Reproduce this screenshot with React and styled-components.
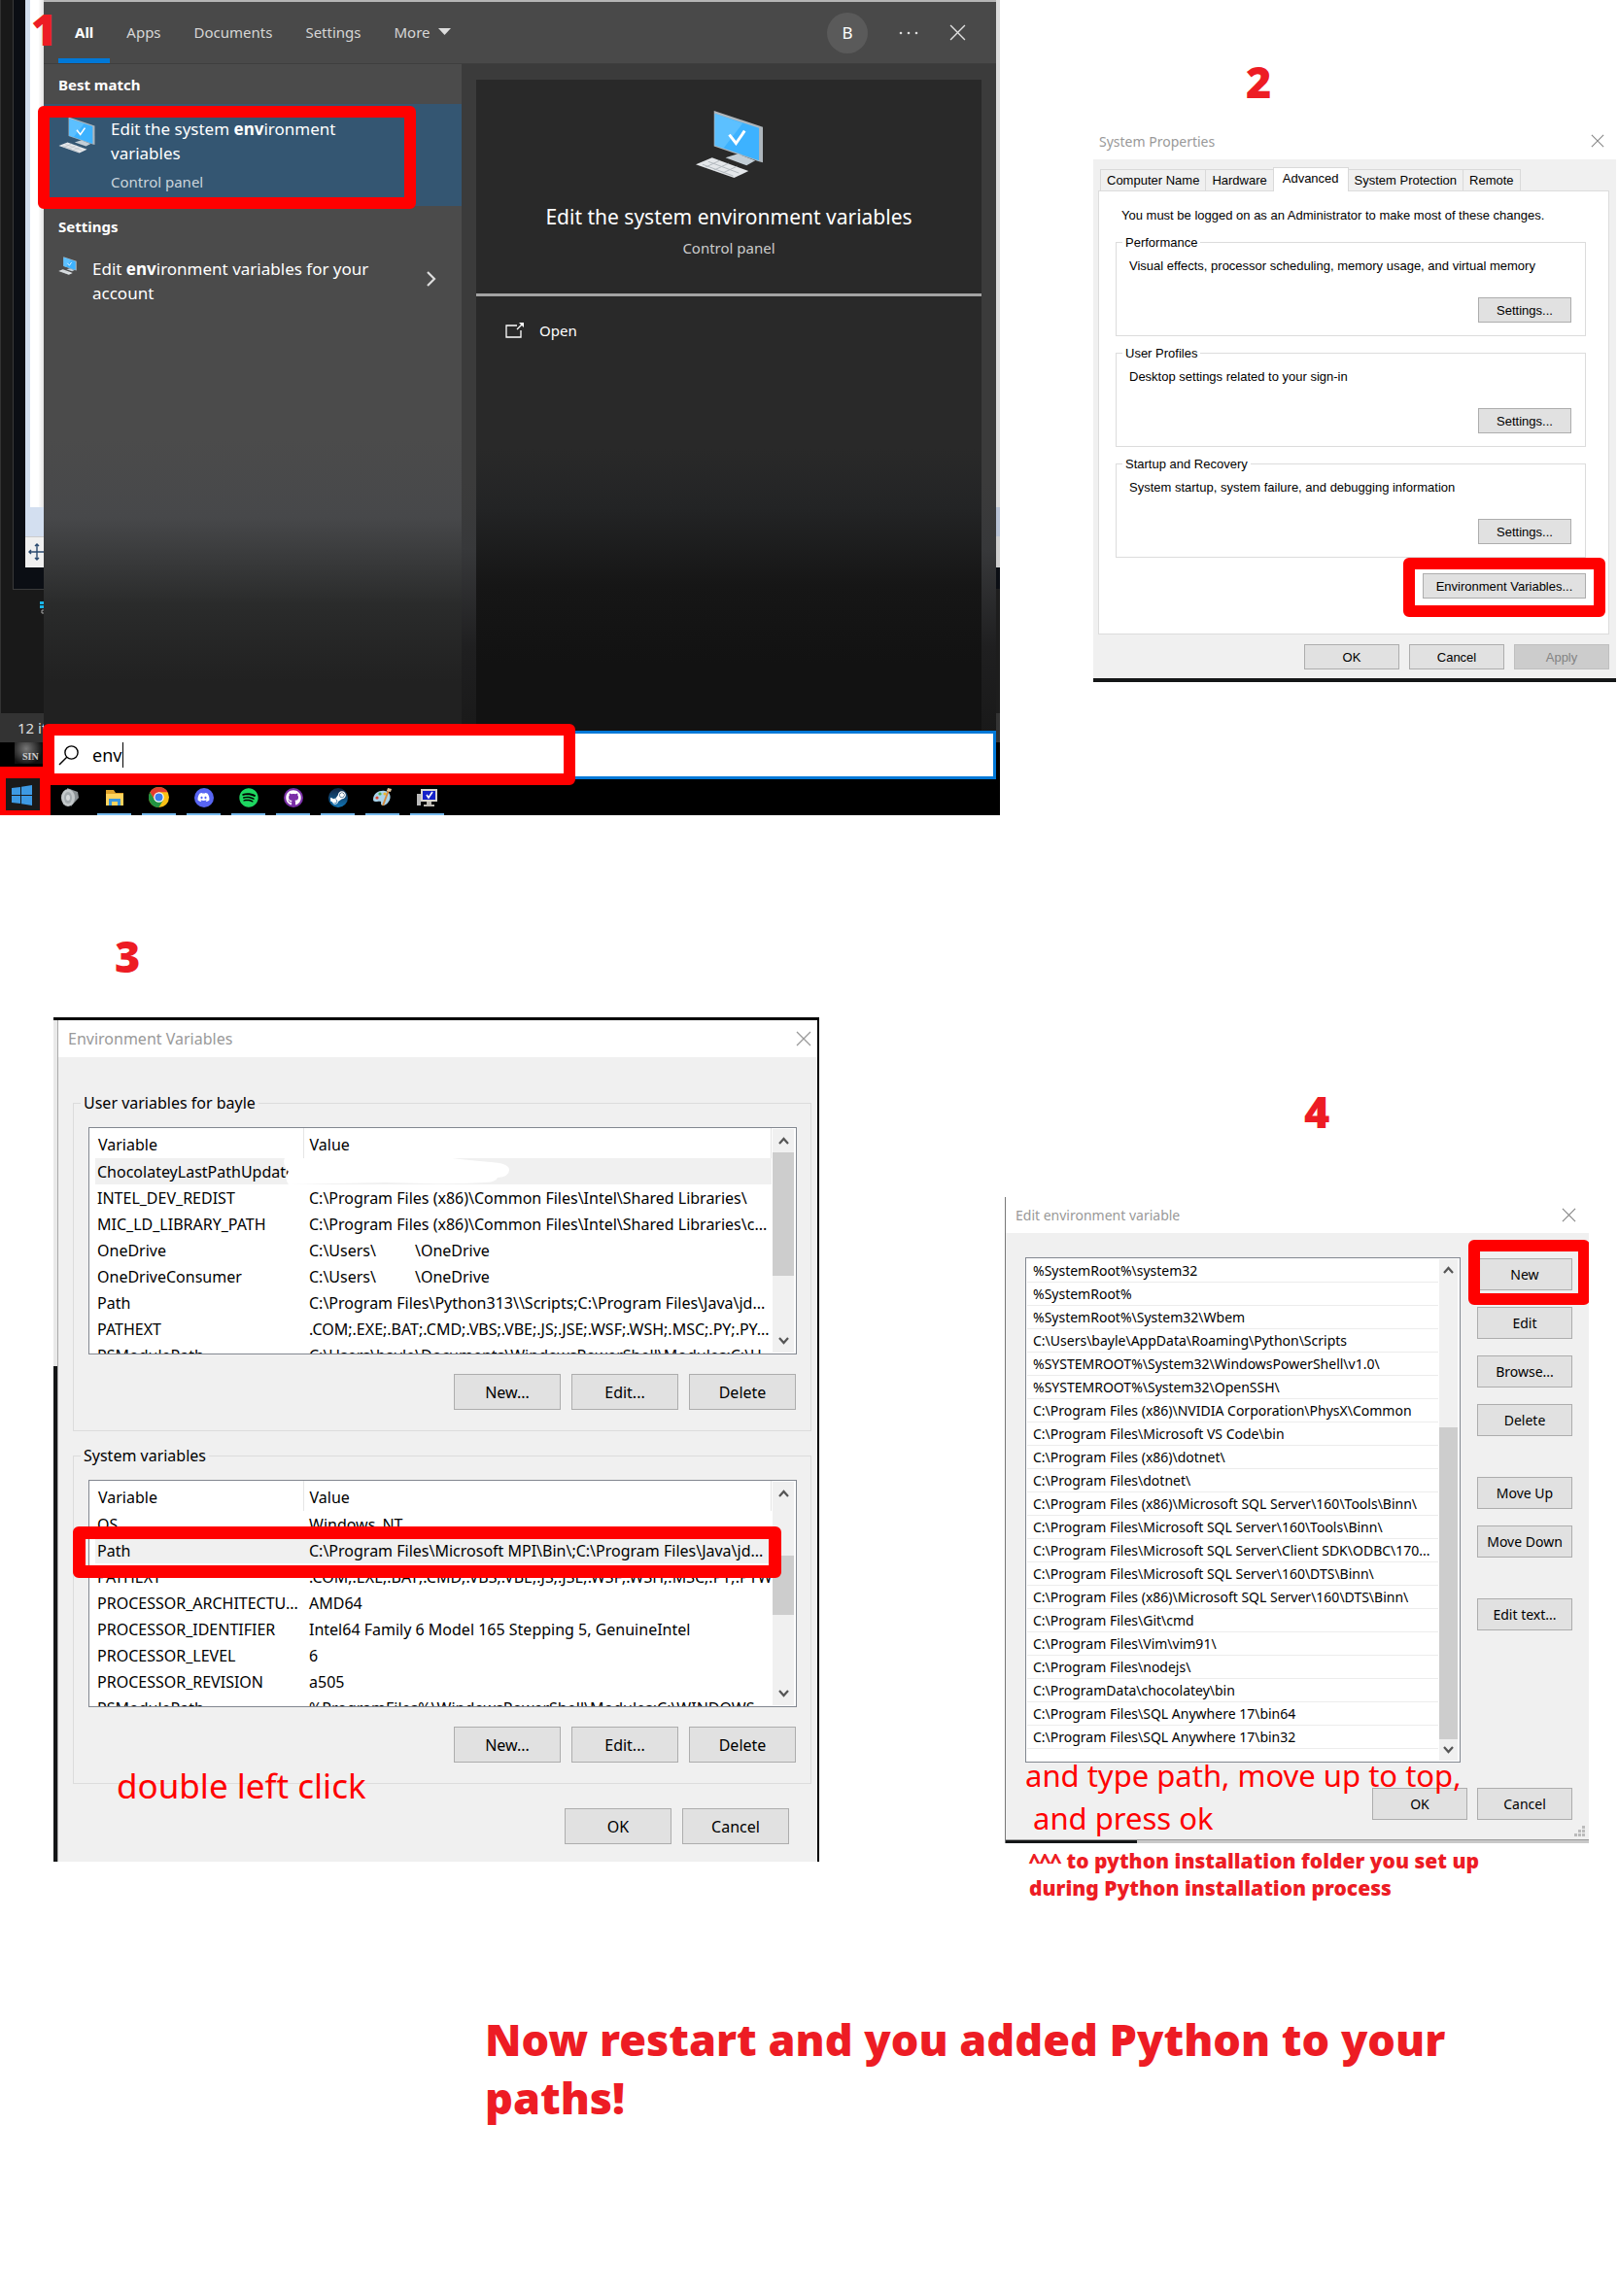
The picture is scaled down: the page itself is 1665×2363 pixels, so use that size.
import React from "react";
import styled, { createGlobalStyle, css } from "styled-components";
import { FaDiscord, FaSpotify, FaGithub, FaSteamSymbol } from "react-icons/fa";

const segoe = `"Noto Sans", "Open Sans", sans-serif`;
const sans = `"Liberation Sans", Arial, sans-serif`;
const marker = "#ed1c24";

const GlobalStyle = createGlobalStyle`
  *, *::before, *::after { box-sizing: border-box; }
  body { margin: 0; background: #fff; font-family: ${segoe}; color: #000; }
  button, input { font: inherit; color: inherit; margin: 0; padding: 0; border: 0; background: none; border-radius: 0; }
  h2, p, ul { margin: 0; padding: 0; font-weight: 400; }
  ul { list-style: none; }
  svg { display: block; flex: none; }
`;

/* ---------- page ---------- */

const Page = styled.main`
  padding-bottom: 172px;
`;

const TopRow = styled.div`
  display: grid;
  grid-template-columns: 1029fr 96fr 538fr 2fr;
  align-items: start;
`;

const MiddleRow = styled.div`
  display: grid;
  grid-template-columns: 55fr 788fr 191fr 601fr 30fr;
  align-items: start;
`;

const ClosingRow = styled.div`
  display: grid;
  grid-template-columns: 499fr 1033fr 133fr;
  margin-top: 112px;
`;

const Step = styled.section`
  grid-column: ${(p) => p.$column};
  min-width: 0;
  padding-top: ${(p) => p.$top}px;
`;

const StepNumber = styled.h2`
  font-size: 45px;
  line-height: 60px;
  font-weight: 900;
  color: ${marker};
  padding-left: ${(p) => p.$indent}px;
  margin-bottom: ${(p) => p.$gap}px;
`;

const OverlayNumber = styled(StepNumber)`
  position: absolute;
  left: 32px;
  top: 0;
  margin: 0;
  padding: 0;
`;

const Closing = styled.p`
  grid-column: 2;
  font-size: 45px;
  line-height: 60px;
  font-weight: 900;
  color: ${marker};
`;

const Footnote = styled.p`
  max-width: 500px;
  margin: 4px 0 0 25px;
  font-size: 21px;
  line-height: 28px;
  font-weight: 900;
  color: ${marker};
`;

const Highlight = styled.span`
  position: absolute;
  z-index: 2;
  inset: ${(p) => p.$inset};
  border: 12px solid #f00;
  border-radius: 6px;
  pointer-events: none;
`;

const Note = styled.p`
  position: absolute;
  z-index: 2;
  left: ${(p) => p.$left}px;
  bottom: ${(p) => p.$bottom}px;
  font-size: ${(p) => p.$size}px;
  line-height: 44px;
  color: #f00;
  white-space: pre;
`;

/* ---------- step 1: start menu search ---------- */

const Desktop = styled.div`
  position: relative;
  display: flex;
  flex-direction: column;
  background: #000;
  overflow: hidden;
`;

const DesktopBody = styled.div`
  display: flex;
  height: 802px;
`;

const Backdrop = styled.div`
  width: 45px;
  flex: none;
  display: flex;
  flex-direction: column;
  overflow: hidden;
`;

const ExplorerSlice = styled.div`
  height: 734px;
  padding-left: 12px;
  background: #191919;
  border-left: 1px solid #333;
`;

const EditorSlice = styled.div`
  height: 607px;
  padding-left: 12px;
  background: #0b0e14;
  border-left: 1px solid #3a3a3a;
  border-bottom: 1px solid #3a3a3a;
`;

const CanvasSlice = styled.div`
  height: 552px;
  padding: 0 0 30px 5px;
  background: #d3dff0;
`;

const Paper = styled.div`
  height: 522px;
  background: linear-gradient(90deg, #fff 60%, #e2e2e2);
`;

const PaintStatus = styled.div`
  height: 32px;
  padding: 6px 0 0 3px;
  background: #f0f0f0;
  border-top: 1px solid #ccc;
`;

const ExplorerRow = styled.div`
  display: flex;
  justify-content: flex-end;
  padding-top: 12px;
`;

const ExplorerStatus = styled.div`
  height: 30px;
  padding-left: 18px;
  background: #333;
  color: #ddd;
  font-size: 15px;
  line-height: 30px;
  white-space: nowrap;
`;

const Thumb = styled.div`
  margin-left: 15px;
  height: 22px;
  background: radial-gradient(circle at 40% 30%, #777, #111 70%);
  color: #ccc;
  font: 700 10px/30px "Liberation Serif", serif;
  padding-left: 8px;
  overflow: hidden;
`;

const RightSlice = styled.div`
  width: 4px;
  flex: none;
  background: linear-gradient(#dcdcdc 0 522px, #b9c3d6 522px 552px, #cfcfcf 552px 584px, #0b0e14 584px 606px, #1d1d1d 606px 734px, #333 734px 764px, #000 764px);
`;

const SearchWindow = styled.div`
  flex: 1;
  min-width: 0;
  display: flex;
  flex-direction: column;
  border-top: 2px solid #b5b5b5;
  color: #fff;
  background: linear-gradient(#4b4b4b 0 450px, #47484a 530px, #2a2b2b 620px, #212121 700px);
`;

const TabBar = styled.div`
  display: flex;
  align-items: stretch;
  height: 64px;
  padding: 0 31px 0 15px;
  border-bottom: 1px solid #3e3e3e;
  background: #494949;
`;

const SearchTab = styled.button`
  display: flex;
  align-items: center;
  gap: 8px;
  padding: 3px 17px 0;
  border-bottom: 5px solid ${(p) => (p.$active ? "#0078d7" : "transparent")};
  font-size: 15px;
  font-weight: ${(p) => (p.$active ? 700 : 400)};
  color: ${(p) => (p.$active ? "#fff" : "#d6d6d6")};
`;

const BarActions = styled.div`
  display: flex;
  align-items: center;
  gap: 32px;
  margin-left: auto;
`;

const Avatar = styled.button`
  width: 42px;
  height: 42px;
  border-radius: 50%;
  background: #5a5a5a;
  font-size: 17px;
`;

const SearchColumns = styled.div`
  flex: 1;
  display: grid;
  grid-template-columns: 430fr 550fr;
  min-height: 0;
`;

const ResultHeading = styled.h2`
  padding: 2px 0 0 15px;
  font-size: 15px;
  line-height: 39px;
  font-weight: 700;
`;

const Result = styled.button`
  position: relative;
  display: flex;
  align-items: flex-start;
  gap: 16px;
  width: 100%;
  padding: ${(p) => (p.$best ? "13px 60px 12px 15px" : "11px 26px 8px 15px")};
  background: ${(p) => (p.$best ? "#345672" : "none")};
  text-align: left;
  font-size: 17px;
  line-height: 25px;
`;

const ResultText = styled.span`
  flex: 1;
`;

const ResultKind = styled.span`
  display: block;
  margin-top: 5px;
  font-size: 15px;
  color: #ccd5dc;
`;

const PreviewPane = styled.div`
  padding: 16px 15px 0;
  background: linear-gradient(#3b3b3b 0 430px, #37383a 500px, #1f1f20 600px, #191919 690px);
`;

const Preview = styled.div`
  height: 100%;
  background: linear-gradient(#292929 0 380px, #232425 440px, #161616 520px, #121212 600px);
`;

const PreviewCard = styled.div`
  display: flex;
  flex-direction: column;
  align-items: center;
  height: 223px;
  padding-top: 31px;
  border-bottom: 3px solid #a3a3a3;
`;

const PreviewTitle = styled.p`
  margin-top: 23px;
  font-size: 21px;
  line-height: 32px;
`;

const PreviewKind = styled.p`
  margin-top: 3px;
  font-size: 15px;
  line-height: 26px;
  color: #ccc;
`;

const OpenAction = styled.button`
  display: flex;
  align-items: center;
  gap: 15px;
  padding: 22px 30px;
  font-size: 15px;
  line-height: 26px;
`;

const SearchBox = styled.div`
  height: 50px;
  flex: none;
  border: 3px solid #0078d7;
  background: #fff;
  color: #000;
`;

const QueryField = styled.label`
  position: relative;
  display: flex;
  align-items: center;
  gap: 14px;
  width: 56%;
  height: 44px;
  padding-left: 12px;
`;

const Query = styled.input`
  width: 31px;
  font-size: 18px;
  line-height: 25px;
  outline: 0;
`;

const Typed = styled.span`
  display: flex;
  padding-top: 1px;
  border-right: 1px solid #000;
`;

const Taskbar = styled.div`
  display: flex;
  height: 37px;
`;

const StartButton = styled.button`
  position: relative;
  width: 47px;
`;

const StartTile = styled.span`
  position: absolute;
  inset: -13px -5px 0 0;
  display: flex;
  align-items: center;
  padding: 2px 0 0 6px;
  border: solid #f00;
  border-width: 12px 11px 5px 6px;
  background: #1a1a1a;
`;

const TaskButton = styled.button`
  display: flex;
  align-items: center;
  justify-content: center;
  width: 35px;
  margin-right: 11px;
  padding-top: 2px;
  border-bottom: 2px solid ${(p) => (p.$open ? "#76b9ed" : "transparent")};
`;

const TaskList = styled.div`
  display: flex;
  padding-left: 7px;
`;

const Badge = styled.span`
  display: flex;
  align-items: center;
  justify-content: center;
  width: 20px;
  height: 20px;
  border-radius: 50%;
  color: ${(p) => p.$color};
  background: ${(p) => p.$background};
`;

const PcIcon = ({ size }) => (
  <svg width={size} height={size} viewBox="0 0 72 72">
    <path d="M20 1 71 18v37l-4-1-47-16z" fill="#aeb6bc" />
    <path d="M21 4 67 19v34L21 37z" fill="#3db2ff" />
    <path d="M21 4 50 14 30 40 21 37z" fill="#5cc0ff" />
    <path d="m36 26 7 9 9-13" fill="none" stroke="#fff" strokeWidth="3" />
    <path d="m32 50 13-4 18 7-9 5z" fill="#c3ced6" />
    <path d="M1 57 18 50l38 14-15 7z" fill="#e4e7ea" />
    <path d="m8 57 32 12M14 54l32 12M11 60l15-7M20 63l15-7M29 66l15-7" stroke="#b3b9be" strokeWidth="1" />
  </svg>
);

const CloseIcon = ({ size, color }) => (
  <svg width={size} height={size} viewBox="0 0 16 16">
    <path d="M1 1 15 15M15 1 1 15" stroke={color} strokeWidth="1.3" />
  </svg>
);

const MoveIcon = () => (
  <svg width="18" height="18" viewBox="0 0 18 18">
    <path d="M9 1v16M1 9h16M7 3l2-2 2 2M7 15l2 2 2-2M3 7 1 9l2 2" fill="none" stroke="#2b4a6f" strokeWidth="1.4" />
  </svg>
);

const LensIcon = () => (
  <svg width="21" height="21" viewBox="0 0 21 21">
    <circle cx="13.5" cy="7.5" r="6.6" fill="none" stroke="#000" strokeWidth="1.4" />
    <path d="M9 12 1 20" stroke="#000" strokeWidth="1.4" />
  </svg>
);

const OpenIcon = () => (
  <svg width="20" height="16" viewBox="0 0 20 16">
    <path d="M12 3H1v12h15V8M12 7l5-5" fill="none" stroke="#fff" strokeWidth="1.3" />
    <path d="M14 0h5v5z" fill="#fff" />
  </svg>
);

const WindowsIcon = () => (
  <svg width="21" height="21" viewBox="0 0 21 21" fill="#3d9ae4">
    <path d="M0 3 9 2v8H0zM10 1.800 21 0v10H10zM0 11h9v8l-9-1zM10 11h11v10l-11-1.800z" />
  </svg>
);

const SpeakerIcon = () => (
  <svg width="20" height="20" viewBox="0 0 20 20">
    <path d="M7 0 18 4l1 6-8 9z" fill="#8b9194" />
    <ellipse cx="8" cy="10" rx="7" ry="9" fill="#c3c8ca" />
    <ellipse cx="8" cy="10" rx="4" ry="6" fill="#a4abae" />
    <ellipse cx="8" cy="10" rx="2" ry="3" fill="#d5d9db" />
  </svg>
);

const FolderIcon = () => (
  <svg width="20" height="18" viewBox="0 0 20 18">
    <path d="M1 1h8l2 3h8v13H1z" fill="#e0a32b" />
    <path d="M1 5h18v12H1z" fill="#ffd35c" />
    <path d="M4 17v-7h12v7h-3v-4H7v4z" fill="#3a96dd" />
  </svg>
);

const ChromeIcon = () => (
  <svg width="21" height="21" viewBox="0 0 24 24">
    <circle cx="12" cy="12" r="12" fill="#fbc116" />
    <path d="M1.600 6A12 12 0 0 1 22.400 6H12L6.800 15z" fill="#e33b2e" />
    <path d="M1.600 6A12 12 0 0 0 12 24l5.200-9H6.800z" fill="#229342" />
    <circle cx="12" cy="12" r="6" fill="#fff" />
    <circle cx="12" cy="12" r="4.600" fill="#3b7ded" />
  </svg>
);

const PaletteIcon = () => (
  <svg width="21" height="21" viewBox="0 0 21 21">
    <path d="M1 13C1 6 8 3 13 4c6 1 7 7 4 11-3 5-8 5-8 2 1-3-2-2-4-2s-4 0-4-2z" fill="#a9d3ea" />
    <circle cx="5" cy="11" r="1.600" fill="#d9442f" />
    <circle cx="8" cy="7" r="1.600" fill="#4caf50" />
    <circle cx="13" cy="7" r="1.600" fill="#f0b429" />
    <path d="M11 19 17 3" stroke="#d58a3c" strokeWidth="2" />
    <path d="m15 4 1-3 4 1-1 3z" fill="#e8c9a0" />
  </svg>
);

const MonitorIcon = () => (
  <svg width="21" height="20" viewBox="0 0 21 20">
    <path d="M0 6h4v12H0z" fill="#b9b9b9" />
    <path d="M4 1h17v13H4z" fill="#d9d6cf" />
    <path d="M6 3h13v9H6z" fill="#1522c9" />
    <path d="m10 7 2 3 4-6" fill="none" stroke="#fff" strokeWidth="1.600" />
    <path d="M10 14h5v3h3v2H7v-2h3z" fill="#bdbab3" />
  </svg>
);

const TASKS = [
  { label: "Sound", open: false, icon: <SpeakerIcon /> },
  { label: "File Explorer", open: true, icon: <FolderIcon /> },
  { label: "Chrome", open: true, icon: <ChromeIcon /> },
  { label: "Discord", open: true, icon: <Badge $color="#fff" $background="#5865f2"><FaDiscord size={13} /></Badge> },
  { label: "Spotify", open: true, icon: <Badge $color="#1ed760" $background="#000"><FaSpotify size={20} /></Badge> },
  { label: "GitHub", open: true, icon: <Badge $color="#fff" $background="#7b2fa8"><FaGithub size={16} /></Badge> },
  { label: "Steam", open: true, icon: <Badge $color="#fff" $background="linear-gradient(#10223f, #1275b5)"><FaSteamSymbol size={18} /></Badge> },
  { label: "Paint", open: true, icon: <PaletteIcon /> },
  { label: "System", open: true, icon: <MonitorIcon /> },
];

const StartSearch = () => (
  <Desktop>
    <DesktopBody>
      <Backdrop>
        <ExplorerSlice>
          <EditorSlice>
            <CanvasSlice>
              <Paper />
            </CanvasSlice>
            <PaintStatus>
              <MoveIcon />
            </PaintStatus>
          </EditorSlice>
          <ExplorerRow>
            <svg width="4" height="14" viewBox="0 0 4 14">
              <path d="M0 0h4v3H0zM0 4h4v3H0z" fill="#19b5e8" />
              <path d="M4 9H2v3h2" fill="none" stroke="#aaa" />
            </svg>
          </ExplorerRow>
        </ExplorerSlice>
        <ExplorerStatus>12 it</ExplorerStatus>
        <Thumb>SIN</Thumb>
      </Backdrop>
      <SearchWindow>
        <TabBar>
          <SearchTab $active>All</SearchTab>
          <SearchTab>Apps</SearchTab>
          <SearchTab>Documents</SearchTab>
          <SearchTab>Settings</SearchTab>
          <SearchTab>
            More
            <svg width="13" height="7" viewBox="0 0 13 7">
              <path d="M0 0h13L6.500 7z" fill="#ddd" />
            </svg>
          </SearchTab>
          <BarActions>
            <Avatar>B</Avatar>
            <svg width="20" height="4" viewBox="0 0 20 4" fill="#ddd">
              <circle cx="2" cy="2" r="1.300" />
              <circle cx="10" cy="2" r="1.300" />
              <circle cx="18" cy="2" r="1.300" />
            </svg>
            <button aria-label="Close">
              <CloseIcon size={17} color="#e0e0e0" />
            </button>
          </BarActions>
        </TabBar>
        <SearchColumns>
          <div>
            <ResultHeading>Best match</ResultHeading>
            <Result $best>
              <PcIcon size={38} />
              <ResultText>
                Edit the system <b>env</b>ironment variables
                <ResultKind>Control panel</ResultKind>
              </ResultText>
              <Highlight $inset="2px 47px -3px -6px" />
            </Result>
            <ResultHeading>Settings</ResultHeading>
            <Result>
              <PcIcon size={19} />
              <ResultText>
                Edit <b>env</b>ironment variables for your account
              </ResultText>
              <svg width="10" height="34" viewBox="0 0 10 34">
                <path d="m1 16 7 7-7 7" fill="none" stroke="#ddd" strokeWidth="2.200" />
              </svg>
            </Result>
          </div>
          <PreviewPane>
            <Preview>
              <PreviewCard>
                <PcIcon size={71} />
                <PreviewTitle>Edit the system environment variables</PreviewTitle>
                <PreviewKind>Control panel</PreviewKind>
              </PreviewCard>
              <OpenAction>
                <OpenIcon />
                Open
              </OpenAction>
            </Preview>
          </PreviewPane>
        </SearchColumns>
        <SearchBox>
          <QueryField>
            <LensIcon />
            <Typed>
              <Query aria-label="Search" defaultValue="env" />
            </Typed>
            <Highlight $inset="-10px 1px -9px -4px" />
          </QueryField>
        </SearchBox>
      </SearchWindow>
      <RightSlice />
    </DesktopBody>
    <Taskbar>
      <StartButton aria-label="Start">
        <StartTile>
          <WindowsIcon />
        </StartTile>
      </StartButton>
      <TaskList>
        {TASKS.map((t) => (
          <TaskButton key={t.label} aria-label={t.label} $open={t.open}>
            {t.icon}
          </TaskButton>
        ))}
      </TaskList>
    </Taskbar>
    <OverlayNumber>1</OverlayNumber>
  </Desktop>
);

/* ---------- shared dialog parts ---------- */

const TitleBar = styled.div`
  display: flex;
  align-items: center;
  justify-content: space-between;
  height: ${(p) => p.$height}px;
  padding: 0 ${(p) => p.$right}px 0 ${(p) => p.$left}px;
  background: #fff;
  color: #999;
  font-family: ${segoe};
  font-size: ${(p) => p.$size}px;
`;

const DialogButton = styled.button`
  position: relative;
  width: ${(p) => p.$width}px;
  height: ${(p) => p.$height}px;
  background: #e1e1e1;
  border: 1px solid #adadad;
  white-space: nowrap;

  &:disabled {
    background: #ccc;
    border-color: #bfbfbf;
    color: #838383;
  }
`;

const ButtonRow = styled.div`
  display: flex;
  justify-content: flex-end;
  gap: ${(p) => p.$gap}px;
  padding: ${(p) => p.$padding};
`;

const Chevron = ({ down }) => (
  <svg width="11" height="8" viewBox="0 0 11 8">
    <path d={down ? "m1 1 4.500 5L10 1" : "m1 7 4.500-5L10 7"} fill="none" stroke="#555" strokeWidth="2.200" />
  </svg>
);

const ScrollTrack = styled.div`
  display: flex;
  flex-direction: column;
  align-items: center;
  flex: none;
  width: ${(p) => p.$width}px;
  margin: 1px 2px 1px 1px;
  background: #f0f0f0;
`;

const ScrollEnd = styled.button`
  display: flex;
  align-items: center;
  justify-content: center;
  width: 100%;
  height: 24px;
`;

const ScrollLane = styled.div`
  flex: 1;
  width: 100%;
  padding-top: ${(p) => p.$before}px;
`;

const ScrollThumb = styled.div`
  height: ${(p) => p.$length}px;
  background: #cdcdcd;
`;

const ScrollBar = ({ width, before, length }) => (
  <ScrollTrack $width={width}>
    <ScrollEnd aria-label="Scroll up"><Chevron /></ScrollEnd>
    <ScrollLane $before={before}>
      <ScrollThumb $length={length} />
    </ScrollLane>
    <ScrollEnd aria-label="Scroll down"><Chevron down /></ScrollEnd>
  </ScrollTrack>
);

/* ---------- step 2: system properties ---------- */

const PropertiesDialog = styled.div`
  font-family: ${sans};
  font-size: 13px;
  background: #f0f0f0;
  border-bottom: 4px solid #141617;
`;

const PropertiesBody = styled.div`
  padding: 8px 7px 9px 5px;
`;

const PropertyTabs = styled.div`
  display: flex;
  align-items: flex-end;
  padding-left: 2px;
`;

const PropertyTab = styled.button`
  height: 22px;
  padding: 0 6px;
  border: 1px solid #d9d9d9;
  border-bottom: 0;
  border-right-width: ${(p) => (p.$last ? 1 : 0)}px;
  white-space: nowrap;

  ${(p) =>
    p.$active &&
    css`
      height: 25px;
      margin-bottom: -1px;
      padding: 0 9px 3px;
      border-right-width: 1px;
      margin-right: -1px;
      background: #fff;
      z-index: 1;
    `}
`;

const PropertySheet = styled.div`
  height: 457px;
  padding: 16px 23px 0 17px;
  background: #fff;
  border: 1px solid #dcdcdc;
`;

const SheetIntro = styled.p`
  padding: 0 0 3px 6px;
  line-height: 18px;
  white-space: nowrap;
`;

const Group = styled.fieldset`
  min-width: 0;
  height: 105px;
  margin: 7px 0 9px;
  padding: 0 14px 13px 13px;
  border: 1px solid #dcdcdc;
  display: flex;
  flex-direction: column;
  justify-content: space-between;
  align-items: flex-end;

  & + & {
    margin-top: 0;
  }
`;

const GroupLegend = styled.legend`
  margin-left: -7px;
  padding: 0 3px;
  line-height: 17px;
`;

const GroupText = styled.p`
  align-self: flex-start;
  padding-top: 7px;
  line-height: 18px;
  white-space: nowrap;
`;

const SheetButtonRow = styled.div`
  display: flex;
  justify-content: flex-end;
  padding-top: 7px;
`;

const GROUPS = [
  ["Performance", "Visual effects, processor scheduling, memory usage, and virtual memory"],
  ["User Profiles", "Desktop settings related to your sign-in"],
  ["Startup and Recovery", "System startup, system failure, and debugging information"],
];

const SystemProperties = () => (
  <PropertiesDialog>
    <TitleBar as="header" $height={38} $left={6} $right={12} $size={14}>
      System Properties
      <button aria-label="Close"><CloseIcon size={14} color="#888" /></button>
    </TitleBar>
    <PropertiesBody>
      <PropertyTabs>
        <PropertyTab>Computer Name</PropertyTab>
        <PropertyTab>Hardware</PropertyTab>
        <PropertyTab $active>Advanced</PropertyTab>
        <PropertyTab>System Protection</PropertyTab>
        <PropertyTab $last>Remote</PropertyTab>
      </PropertyTabs>
      <PropertySheet>
        <SheetIntro>You must be logged on as an Administrator to make most of these changes.</SheetIntro>
        {GROUPS.map(([title, text]) => (
          <Group key={title}>
            <GroupLegend>{title}</GroupLegend>
            <GroupText>{text}</GroupText>
            <DialogButton $width={96} $height={26}>Settings...</DialogButton>
          </Group>
        ))}
        <SheetButtonRow>
          <DialogButton $width={168} $height={26}>
            Environment Variables...
            <Highlight $inset="-17px -21px -20px -21px" />
          </DialogButton>
        </SheetButtonRow>
      </PropertySheet>
      <ButtonRow $gap={10} $padding="10px 0 0">
        <DialogButton $width={98} $height={26}>OK</DialogButton>
        <DialogButton $width={98} $height={26}>Cancel</DialogButton>
        <DialogButton $width={98} $height={26} disabled>Apply</DialogButton>
      </ButtonRow>
    </PropertiesBody>
  </PropertiesDialog>
);

/* ---------- step 3: environment variables ---------- */

const VariablesShot = styled.div`
  position: relative;
  display: flex;
  border-top: 3px solid #000;
  border-right: 2px solid #000;
`;

const VariablesEdge = styled.div`
  width: 5px;
  flex: none;
  background: linear-gradient(#e9e9e9 0 356px, #141617 356px);
  border-right: 1px solid #aaa;
`;

const VariablesDialog = styled.div`
  flex: 1;
  min-width: 0;
  background: #f0f0f0;
  font-size: 16px;
`;

const VariablesBody = styled.div`
  padding: 35px 6px 18px 15px;
`;

const VariablesGroup = styled.fieldset`
  min-width: 0;
  margin: 0 0 13px;
  padding: 13px 14px 21px 15px;
  border: 1px solid #dcdcdc;
`;

const VariablesLegend = styled.legend`
  margin-left: -8px;
  padding: 0 3px;
  line-height: 24px;
`;

const ListBox = styled.div`
  position: relative;
  display: flex;
  height: 234px;
  border: 1px solid #828790;
  background: #fff;
`;

const ListViewport = styled.div`
  flex: 1;
  min-width: 0;
  overflow: hidden;
`;

const VariableTable = styled.table`
  width: 100%;
  table-layout: fixed;
  border-collapse: collapse;
`;

const NameColumn = styled.col`
  width: 217px;
`;

const HeadCell = styled.th`
  height: 31px;
  padding: 2px 0 0 6px;
  border-right: 1px solid #e5e5e5;
  font-weight: 400;
  text-align: left;
`;

const Cell = styled.td`
  position: relative;
  height: 27px;
  padding: 0 0 0 6px;
  line-height: 26px;
  white-space: nowrap;
  overflow: ${(p) => (p.$open ? "visible" : "hidden")};
  background: ${(p) => (p.$selected ? "#f0f0f0" : "#fff")};

  &:first-child {
    padding-left: 2px;
    border-left: 6px solid #fff;
  }
`;

const Redacted = styled.span`
  display: inline-block;
  width: 40px;
`;

const Smudge = styled.svg`
  position: absolute;
  left: -20px;
  top: 0;
`;

const RowHighlight = styled(Highlight)`
  border-width: 13px;
`;

const VariableList = ({ rows, label, before, length, children }) => (
  <ListBox>
    <ListViewport>
      <VariableTable aria-label={label}>
        <colgroup>
          <NameColumn />
          <col />
        </colgroup>
        <thead>
          <tr>
            <HeadCell>Variable</HeadCell>
            <HeadCell>Value</HeadCell>
          </tr>
        </thead>
        <tbody>
          {rows.map((r) => (
            <tr key={r.name}>
              <Cell $selected={r.selected}>{r.name}</Cell>
              <Cell $selected={r.selected} $open={r.erased}>
                {r.value}
                {r.erased && (
                  <Smudge width="236" height="27" viewBox="0 0 236 27">
                    <path d="M1 0h172q16 2 40 4 19 1 19 8t-12 8q-2 5-14 5-30 2-60 1L104 25 5 27Q0 20 5 14-2 6 1 0z" fill="#fff" />
                  </Smudge>
                )}
              </Cell>
            </tr>
          ))}
        </tbody>
      </VariableTable>
    </ListViewport>
    <ScrollBar width={22} before={before} length={length} />
    {children}
  </ListBox>
);

const oneDrive = (
  <>
    C:\Users\
    <Redacted />
    \OneDrive
  </>
);

const USER_ROWS = [
  { name: "ChocolateyLastPathUpdate", value: "", selected: true, erased: true },
  { name: "INTEL_DEV_REDIST", value: "C:\\Program Files (x86)\\Common Files\\Intel\\Shared Libraries\\" },
  { name: "MIC_LD_LIBRARY_PATH", value: "C:\\Program Files (x86)\\Common Files\\Intel\\Shared Libraries\\c..." },
  { name: "OneDrive", value: oneDrive },
  { name: "OneDriveConsumer", value: oneDrive },
  { name: "Path", value: "C:\\Program Files\\Python313\\\\Scripts;C:\\Program Files\\Java\\jd..." },
  { name: "PATHEXT", value: ".COM;.EXE;.BAT;.CMD;.VBS;.VBE;.JS;.JSE;.WSF;.WSH;.MSC;.PY;.PY..." },
  { name: "PSModulePath", value: "C:\\Users\\bayle\\Documents\\WindowsPowerShell\\Modules;C:\\U..." },
];

const SYSTEM_ROWS = [
  { name: "OS", value: "Windows_NT" },
  { name: "Path", value: "C:\\Program Files\\Microsoft MPI\\Bin\\;C:\\Program Files\\Java\\jd...", selected: true },
  { name: "PATHEXT", value: ".COM;.EXE;.BAT;.CMD;.VBS;.VBE;.JS;.JSE;.WSF;.WSH;.MSC;.PY;.PYW" },
  { name: "PROCESSOR_ARCHITECTU...", value: "AMD64" },
  { name: "PROCESSOR_IDENTIFIER", value: "Intel64 Family 6 Model 165 Stepping 5, GenuineIntel" },
  { name: "PROCESSOR_LEVEL", value: "6" },
  { name: "PROCESSOR_REVISION", value: "a505" },
  { name: "PSModulePath", value: "%ProgramFiles%\\WindowsPowerShell\\Modules;C:\\WINDOWS..." },
];

const VariableButtons = () => (
  <ButtonRow $gap={11} $padding="20px 1px 0">
    <DialogButton $width={110} $height={37}>New...</DialogButton>
    <DialogButton $width={110} $height={37}>Edit...</DialogButton>
    <DialogButton $width={110} $height={37}>Delete</DialogButton>
  </ButtonRow>
);

const EnvironmentVariables = () => (
  <VariablesShot>
    <VariablesEdge />
    <VariablesDialog>
      <TitleBar as="header" $height={38} $left={10} $right={6} $size={16}>
        Environment Variables
        <button aria-label="Close"><CloseIcon size={16} color="#999" /></button>
      </TitleBar>
      <VariablesBody>
        <VariablesGroup>
          <VariablesLegend>User variables for bayle</VariablesLegend>
          <VariableList label="User variables" rows={USER_ROWS} before={0} length={127} />
          <VariableButtons />
        </VariablesGroup>
        <VariablesGroup>
          <VariablesLegend>System variables</VariablesLegend>
          <VariableList label="System variables" rows={SYSTEM_ROWS} before={52} length={61}>
            <RowHighlight $inset="47px 15px 132px -17px" />
          </VariableList>
          <VariableButtons />
        </VariablesGroup>
        <ButtonRow $gap={11} $padding="12px 23px 0">
          <DialogButton $width={110} $height={37}>OK</DialogButton>
          <DialogButton $width={110} $height={37}>Cancel</DialogButton>
        </ButtonRow>
      </VariablesBody>
    </VariablesDialog>
    <Note $left={65} $bottom={56} $size={35}>double left click</Note>
  </VariablesShot>
);

/* ---------- step 4: edit environment variable ---------- */

const EditShot = styled.div`
  position: relative;
  overflow: hidden;
  border-left: 1px solid #777;
  background: linear-gradient(90deg, #141617 0 135px, #c8c8c8 135px);
  padding-bottom: 3px;
  font-size: 14px;
`;

const EditBody = styled.div`
  display: flex;
  gap: 17px;
  padding: 25px 17px 0 20px;
  background: #f0f0f0;
`;

const PathBox = styled.div`
  flex: 1;
  min-width: 0;
  display: flex;
  height: 520px;
  border: 1px solid #828790;
  background: #fff;
`;

const PathList = styled.ul`
  flex: 1;
  min-width: 0;
  padding: 1px 0 0 1px;
`;

const PathItem = styled.li`
  height: 24px;
  padding-left: 6px;
  border-bottom: 1px solid #ececec;
  line-height: 24px;
  white-space: nowrap;
  overflow: hidden;
`;

const SideButtons = styled.div`
  display: flex;
  flex-direction: column;
  gap: 17px;
  padding-top: 1px;
`;

const SideGroup = styled.div`
  display: flex;
  flex-direction: column;
  gap: 17px;
  margin-bottom: 25px;
`;

const EditFooter = styled.div`
  background: #f0f0f0;
  border-bottom: 1px solid #999;
`;

const Grip = styled.svg`
  margin: 6px 3px 2px auto;
`;

const PATHS = [
  "%SystemRoot%\\system32",
  "%SystemRoot%",
  "%SystemRoot%\\System32\\Wbem",
  "C:\\Users\\bayle\\AppData\\Roaming\\Python\\Scripts",
  "%SYSTEMROOT%\\System32\\WindowsPowerShell\\v1.0\\",
  "%SYSTEMROOT%\\System32\\OpenSSH\\",
  "C:\\Program Files (x86)\\NVIDIA Corporation\\PhysX\\Common",
  "C:\\Program Files\\Microsoft VS Code\\bin",
  "C:\\Program Files (x86)\\dotnet\\",
  "C:\\Program Files\\dotnet\\",
  "C:\\Program Files (x86)\\Microsoft SQL Server\\160\\Tools\\Binn\\",
  "C:\\Program Files\\Microsoft SQL Server\\160\\Tools\\Binn\\",
  "C:\\Program Files\\Microsoft SQL Server\\Client SDK\\ODBC\\170...",
  "C:\\Program Files\\Microsoft SQL Server\\160\\DTS\\Binn\\",
  "C:\\Program Files (x86)\\Microsoft SQL Server\\160\\DTS\\Binn\\",
  "C:\\Program Files\\Git\\cmd",
  "C:\\Program Files\\Vim\\vim91\\",
  "C:\\Program Files\\nodejs\\",
  "C:\\ProgramData\\chocolatey\\bin",
  "C:\\Program Files\\SQL Anywhere 17\\bin64",
  "C:\\Program Files\\SQL Anywhere 17\\bin32",
];

const SIDE_GROUPS = [["New", "Edit", "Browse...", "Delete"], ["Move Up", "Move Down"], ["Edit text..."]];

const EditVariable = () => (
  <EditShot>
    <TitleBar as="header" $height={37} $left={10} $right={13} $size={14}>
      Edit environment variable
      <button aria-label="Close"><CloseIcon size={15} color="#888" /></button>
    </TitleBar>
    <EditBody>
      <PathBox>
        <PathList>
          {PATHS.map((p) => (
            <PathItem key={p}>{p}</PathItem>
          ))}
        </PathList>
        <ScrollBar width={19} before={151} length={321} />
      </PathBox>
      <SideButtons>
        {SIDE_GROUPS.map((labels) => (
          <SideGroup key={labels[0]}>
            {labels.map((l) => (
              <DialogButton key={l} $width={98} $height={33}>
                {l}
                {l === "New" && <Highlight $inset="-20px -19px -16px -10px" />}
              </DialogButton>
            ))}
          </SideGroup>
        ))}
      </SideButtons>
    </EditBody>
    <EditFooter>
      <ButtonRow $gap={10} $padding="26px 17px 0">
        <DialogButton $width={98} $height={33}>OK</DialogButton>
        <DialogButton $width={98} $height={33}>Cancel</DialogButton>
      </ButtonRow>
      <Grip width="12" height="12" viewBox="0 0 12 12" fill="#bbb">
        <path d="M8 0h3v3H8zM8 4h3v3H8zM4 4h3v3H4zM8 8h3v3H8zM4 8h3v3H4zM0 8h3v3H0z" />
      </Grip>
    </EditFooter>
    <Note $left={20} $bottom={4} $size={31}>{"and type path, move up to top,\n and press ok"}</Note>
  </EditShot>
);

export default function App() {
  return (
    <Page>
      <GlobalStyle />
      <TopRow>
        <Step $column={1} $top={0}>
          <StartSearch />
        </Step>
        <Step $column={3} $top={54}>
          <StepNumber $indent={157} $gap={12}>2</StepNumber>
          <SystemProperties />
        </Step>
      </TopRow>
      <MiddleRow>
        <Step $column={2} $top={115}>
          <StepNumber $indent={63} $gap={33}>3</StepNumber>
          <EnvironmentVariables />
        </Step>
        <Step $column={4} $top={275}>
          <StepNumber $indent={308} $gap={58}>4</StepNumber>
          <EditVariable />
          <Footnote>^^^ to python installation folder you set up during Python installation process</Footnote>
        </Step>
      </MiddleRow>
      <ClosingRow>
        <Closing>Now restart and you added Python to your paths!</Closing>
      </ClosingRow>
    </Page>
  );
}
